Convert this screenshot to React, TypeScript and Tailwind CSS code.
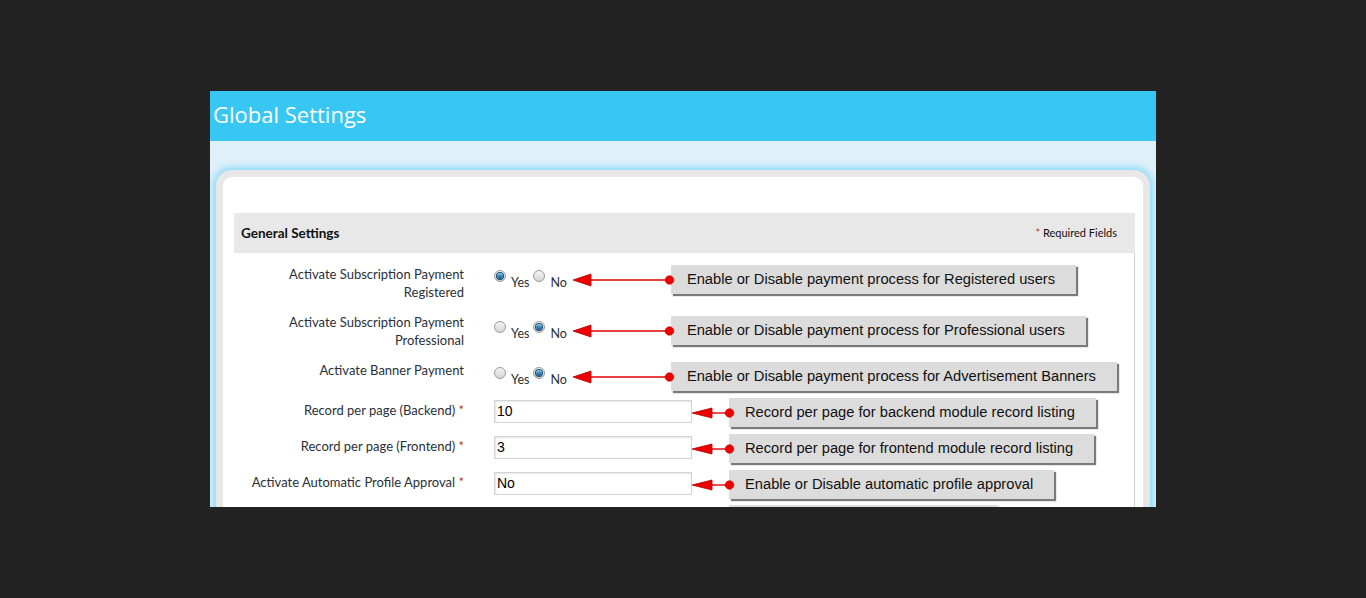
import type { ReactNode } from 'react'

const labelFont = { fontFamily: 'Lato, "Open Sans", sans-serif' }
const tipFont = { fontFamily: '"Liberation Sans", Arial, sans-serif' }

function Radio({ checked }: { checked?: boolean }) {
  return (
    <span className="flex h-[12px] w-[12px] shrink-0 items-center justify-center rounded-full border border-[#9a9a9a] bg-gradient-to-b from-[#f4f4f4] to-[#d6d6d6]">
      {checked && (
        <span className="h-[6px] w-[6px] rounded-full bg-gradient-to-b from-[#7cc3ef] to-[#0b4f86] shadow-[0_0_0_1px_#134d73]" />
      )}
    </span>
  )
}

function YesNo({ yes }: { yes: boolean }) {
  return (
    <div className="flex items-start text-[12.5px] text-[#2b2f36]" style={labelFont}>
      <Radio checked={yes} />
      <span className="ml-[5px] mr-[4px] mt-[6px] leading-[14px]">Yes</span>
      <Radio checked={!yes} />
      <span className="ml-[5px] mt-[6px] leading-[14px]">No</span>
    </div>
  )
}

function LongArrow() {
  return (
    <svg width="102" height="14" viewBox="0 0 102 14" className="relative z-10 ml-[6px] shrink-0">
      <line x1="17" y1="7" x2="96" y2="7" stroke="#e00000" strokeWidth="1.4" />
      <polygon points="0,7 18,1 18,13" fill="#ee0000" stroke="#b00000" strokeWidth="0.8" />
      <circle cx="96.5" cy="7" r="4.3" fill="#ee0000" stroke="#b00000" strokeWidth="0.6" />
    </svg>
  )
}

function ShortArrow() {
  return (
    <svg width="43" height="14" viewBox="0 0 43 14" className="relative z-10 shrink-0">
      <line x1="19" y1="7" x2="37" y2="7" stroke="#e00000" strokeWidth="1.4" />
      <polygon points="0,7 20,2 20,12" fill="#ee0000" stroke="#b00000" strokeWidth="0.8" />
      <circle cx="37.5" cy="7" r="4.3" fill="#ee0000" stroke="#b00000" strokeWidth="0.6" />
    </svg>
  )
}

function Tip({ children, shift, width }: { children?: ReactNode; shift: string; width?: string }) {
  return (
    <div
      className={`flex h-[29px] shrink-0 items-center whitespace-nowrap bg-[#dcdcdc] pl-[16px] pr-[21px] text-[14.7px] text-[#111] shadow-[2px_2px_1px_#7a7a7a] ${shift} ${width ?? ''}`}
      style={tipFont}
    >
      {children}
    </div>
  )
}

function Field({ value }: { value: string }) {
  return (
    <div
      className="mt-[2px] flex h-[23px] w-[198px] shrink-0 items-center border border-[#d2d2d2] bg-white pl-[2px] text-[14px] text-black shadow-[inset_1px_1px_2px_#e6e6e6]"
      style={tipFont}
    >
      {value}
    </div>
  )
}

function Label({ children, required }: { children: ReactNode; required?: boolean }) {
  return (
    <div className="w-[230px] shrink-0 text-right text-[13px] leading-[18px] text-[#2b2f36]" style={labelFont}>
      {children}
      {required && <span className="text-[#c0392b]"> *</span>}
    </div>
  )
}

function RadioRow({ label, yes, tip, top }: { label: ReactNode; yes: boolean; tip: string; top: string }) {
  return (
    <div className="flex h-[48px] items-start">
      <div className="pt-[12px]">
        <Label>{label}</Label>
      </div>
      <div className={`ml-[30px] flex h-[29px] items-center ${top}`}>
        <YesNo yes={yes} />
        <LongArrow />
        <Tip shift="ml-[-4px]">{tip}</Tip>
      </div>
    </div>
  )
}

function InputRow({ label, value, tip }: { label: string; value: string; tip: string }) {
  return (
    <div className="flex h-[36px] items-start">
      <div className="pt-[4px]">
        <Label required>{label}</Label>
      </div>
      <div className="ml-[30px] mt-[1px] flex items-start">
        <Field value={value} />
        <div className="mt-[8px]">
          <ShortArrow />
        </div>
        <Tip shift="ml-[-6px]">{tip}</Tip>
      </div>
    </div>
  )
}

export default function App() {
  return (
    <div className="h-[598px] w-full bg-[#222222] pt-[91px]">
      <div className="mx-auto h-[416px] w-[946px] overflow-hidden bg-[#dff0fa]">
        <div className="flex h-[50px] items-center bg-[#38c6f2] pb-[4px] pl-[3px]">
          <h1
            className="text-[22px] font-medium leading-none text-white"
            style={{ fontFamily: '"Open Sans", sans-serif' }}
          >
            Global Settings
          </h1>
        </div>

        <div className="pl-[6px] pr-[6px] pt-[29px]">
          <div className="rounded-[16px] border-[7px] border-[#e8e8e8] bg-white pl-[11px] pr-[8px] pt-[36px] shadow-[0_0_7px_3px_#8ddaf7]">
            <div className="flex h-[40px] items-center justify-between bg-[#e8e8e8] pl-[7px] pr-[18px]" style={labelFont}>
              <span className="text-[13.5px] font-bold text-[#111]">General Settings</span>
              <span className="text-[11px] text-[#111]">
                <span className="text-[#c0392b]">*</span> Required Fields
              </span>
            </div>

            <div className="border-r border-[#cfcfcf] pb-[20px]">
              <RadioRow
                label={<>Activate Subscription Payment<br />Registered</>}
                yes
                top="mt-[12px]"
                tip="Enable or Disable payment process for Registered users"
              />
              <RadioRow
                label={<>Activate Subscription Payment<br />Professional</>}
                yes={false}
                top="mt-[15px]"
                tip="Enable or Disable payment process for Professional users"
              />
              <RadioRow
                label="Activate Banner Payment"
                yes={false}
                top="mt-[13px]"
                tip="Enable or Disable payment process for Advertisement Banners"
              />
              <InputRow label="Record per page (Backend)" value="10" tip="Record per page for backend module record listing" />
              <InputRow label="Record per page (Frontend)" value="3" tip="Record per page for frontend module record listing" />
              <InputRow label="Activate Automatic Profile Approval" value="No" tip="Enable or Disable automatic profile approval" />
              <div className="flex h-[36px] items-start pl-[495px]">
                <Tip shift="" width="w-[269px]" />
              </div>
            </div>
          </div>
        </div>
      </div>
    </div>
  )
}
